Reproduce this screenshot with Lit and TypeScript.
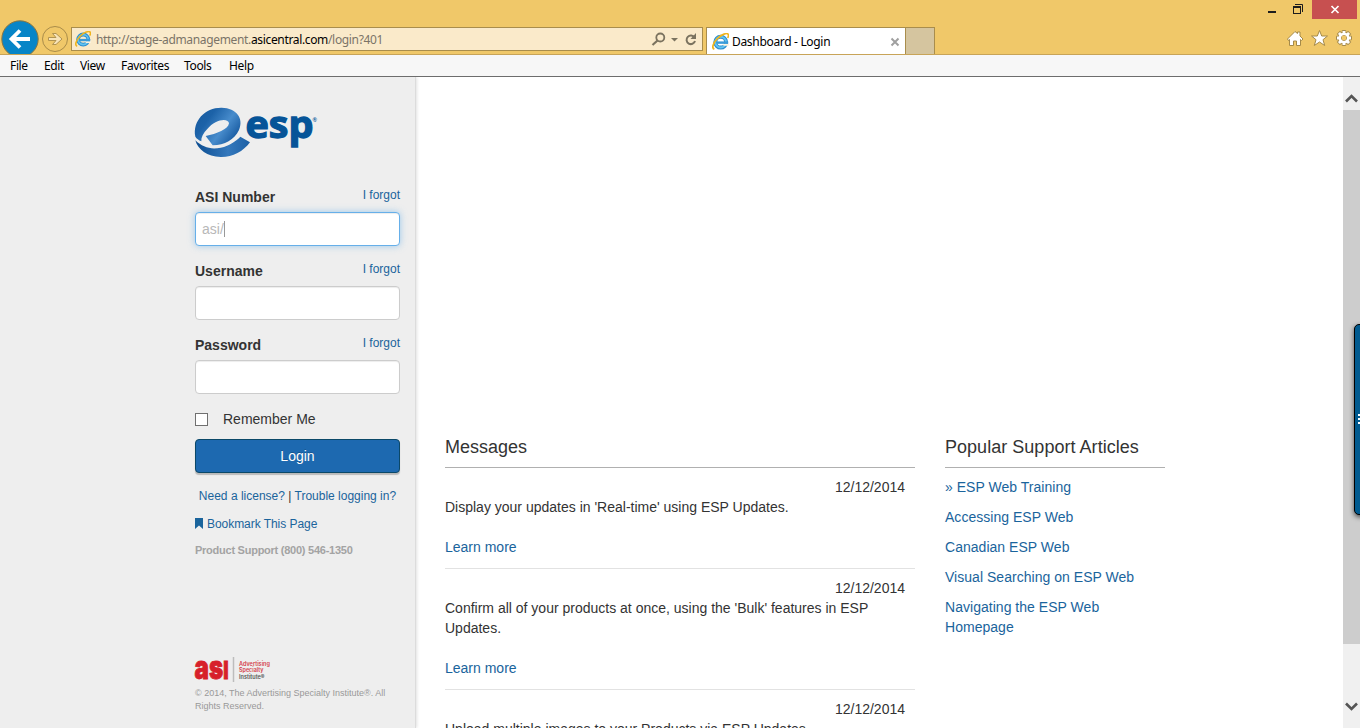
import { LitElement, html, css, svg } from "lit";
import { customElement } from "lit/decorators.js";

const ieLogo = (size: number) => html`
  <svg width=${size} height=${size} viewBox="0 0 16 16">
    <circle cx="8.2" cy="8.6" r="5.1" fill="none" stroke="#2c8fd0" stroke-width="3.8" />
    <circle cx="8.2" cy="8.6" r="5" fill="none" stroke="#62c3f0" stroke-width="1.8" />
    <path d="M9.5 10.2H15.9V12H11Z" fill="#fcf3df" />
    <path d="M4.5 7.9H15.2V10.200H4.5Z" fill="#3a9bd8" />
    <path d="M2.2 15.2C-.6 14.3 1 9.400 5 5.200C9 1.200 14.300-.6 15.300 1.300C15.800 2.300 15.300 3.600 14.700 4.600" fill="none" stroke="#f0b41c" stroke-width="1.600" />
  </svg>`;

const chevron = (d: string) => html`
  <svg width="17" height="14" viewBox="0 0 17 14"><path d=${d} fill="none" stroke="#555" stroke-width="2.600" /></svg>`;

@customElement("browser-chrome")
class BrowserChrome extends LitElement {
  static styles = css`
    :host { display: block; font-family: "Noto Sans", "Open Sans", sans-serif; font-size: 12px; color: #000; }
    svg { display: block; flex: none; }
    .frame { background: #f0c869; border-bottom: 1px solid #c8a458; height: 54px; }
    .caption { display: flex; justify-content: flex-end; height: 20px; padding-right: 3px; }
    .nav { display: flex; height: 34px; }
    .address { display: flex; align-items: center; box-sizing: border-box; width: 632px; height: 24px; margin: 7px 3px 0 1px; border: 1px solid #a98d4c; background: #faeaca; padding: 0 4px 0 3px; }
    .url { flex: 1; margin-left: 5px; padding-top: 2px; color: #7b7468; white-space: nowrap; line-height: 20px; letter-spacing: -0.34px; }
    .url b { font-weight: 400; color: #000; }
    .tab { display: flex; align-items: center; box-sizing: border-box; width: 200px; height: 27px; margin-top: 7px; border: 1px solid #a98d4c; border-bottom: 0; background: #fff; padding: 1px 5px 0 5px; }
    .title { flex: 1; margin-left: 3px; letter-spacing: -0.32px; }
    .new { box-sizing: border-box; width: 29px; height: 27px; margin-top: 7px; border: 1px solid #a98d4c; border-left: 0; border-bottom: 0; background: #d5c59f; }
    .tools { display: flex; gap: 8px; margin: 9px 6px 0 auto; }
    .menu { display: flex; height: 21px; background: #f7f7f7; border-bottom: 1px solid #6d6d6d; padding-left: 10px; line-height: 21px; }
    .menu span { white-space: nowrap; letter-spacing: -0.35px; }
    .m0 { width: 34px; } .m1 { width: 36px; } .m2 { width: 41px; } .m3 { width: 63px; } .m4 { width: 45px; } .m5 { width: 40px; }
  `;
  render() {
    return html`
      <div class="frame">
        <div class="caption">
          <svg width="94" height="20" viewBox="1263 0 94 20">
            <path d="M1268 11H1276V13H1268Z" fill="#1d1d1d" />
            <path d="M1293 6H1301V14H1293ZM1294 8V13H1300V8Z" fill="#1d1d1d" fill-rule="evenodd" />
            <path d="M1295 4.500H1302.500V12" fill="none" stroke="#1d1d1d" />
            <path d="M1312 0H1357V19H1312Z" fill="#c75050" />
            <path d="M1331.500 6L1338.500 13M1338.500 6L1331.500 13" stroke="#fff" stroke-width="1.700" />
          </svg>
        </div>
        <div class="nav">
          <svg width="70" height="34" viewBox="0 20 70 34">
            <circle cx="20" cy="39" r="18.200" fill="#0785c7" stroke="#8a7640" />
            <path d="M30 39H12M20 30.500L11.500 39L20 47.500" fill="none" stroke="#fff" stroke-width="3.800" />
            <circle cx="55" cy="39" r="12.500" fill="none" stroke="#a98c49" />
            <path d="M48.500 37.500H56L52.500 33.500H56L62 39L56 44.500H52.500L56 40.500H48.500Z" fill="#f8e4b8" stroke="#a98c49" stroke-width=".9" />
          </svg>
          <div class="address">
            ${ieLogo(16)}
            <div class="url"><span>http://stage-admanagement.</span><b>asicentral.com</b>/login?401</div>
            <svg width="48" height="20" viewBox="650 29 48 20" fill="none" stroke="#7b735f">
              <circle cx="660.300" cy="37.500" r="4" stroke-width="1.800" />
              <path d="M657.500 40.500L652.500 45" stroke-width="2.200" />
              <path d="M671 38H678L674.500 41.500Z" fill="#7b735f" stroke="none" />
              <path d="M694.500 37.500A4.300 4.300 0 1 0 695 41" stroke-width="2" />
              <path d="M696 33V39H690.500Z" fill="#7b735f" stroke="none" />
            </svg>
          </div>
          <div class="tab">
            ${ieLogo(17)}
            <div class="title">Dashboard - Login</div>
            <svg width="10" height="10" viewBox="0 0 10 10"><path d="M1.500 1.500L8.500 8.500M8.500 1.500L1.500 8.500" stroke="#a0a0a0" stroke-width="2" /></svg>
          </div>
          <div class="new"></div>
          <div class="tools">
            <svg width="68" height="20" viewBox="1286 29 68 20" fill="#fff" stroke="#a58a49" stroke-width="1">
              <path d="M1287.500 39L1295 31.500L1297.500 33.500V32H1300V36L1303 39L1301.500 40.500L1300.500 39.500V45.500H1296.500V41H1293.500V45.500H1289.500V39.500L1288.500 40.500Z" />
              <path d="M1319.500 30.500L1321.700 36H1327.500L1323 39.700L1324.700 45.500L1319.500 42L1314.300 45.500L1316 39.700L1311.500 36H1317.300Z" />
              <g>${Array.from({ length: 8 }, (_, i) => svg`<path d="M1342.200 34V30.500H1345.800V34" transform=${`rotate(${i * 45} 1344 38)`} />`)}</g>
              <circle cx="1344" cy="38" r="4.300" fill="none" stroke="#a58a49" stroke-width="3.800" />
              <circle cx="1344" cy="38" r="4.300" fill="none" stroke="#fff" stroke-width="2.600" />
              ${Array.from({ length: 8 }, (_, i) => svg`<path d="M1342.700 31H1345.300V35H1342.700Z" stroke="none" transform=${`rotate(${i * 45} 1344 38)`} />`)}
            </svg>
          </div>
        </div>
      </div>
      <div class="menu">
        ${["File", "Edit", "View", "Favorites", "Tools", "Help"].map((t, i) => html`<span class="m${i}">${t}</span>`)}
      </div>`;
  }
}

@customElement("login-panel")
class LoginPanel extends LitElement {
  static styles = css`
    :host { display: block; box-sizing: border-box; width: 416px; height: 651px; padding: 28px 0 0 195px; background: #eee; border-right: 1px solid #dcdcdc; box-shadow: 1px 0 3px rgba(0, 0, 0, 0.12); }
    svg { display: block; overflow: visible; }
    .col { width: 205px; height: 623px; display: flex; flex-direction: column; }
    .form { margin-top: 27px; display: flex; flex-direction: column; }
    .field { margin-bottom: 15px; }
    .head { display: flex; justify-content: space-between; height: 20px; margin-bottom: 5px; font-weight: 700; }
    a { color: #1a649c; }
    .forgot { font-size: 12px; font-weight: 400; line-height: 16px; }
    .input { box-sizing: border-box; height: 34px; border: 1px solid #ccc; border-radius: 4px; background: #fff; box-shadow: inset 0 1px 1px rgba(0, 0, 0, 0.075); padding: 6px; color: #b8b8b8; display: flex; }
    .focus { border-color: #66afe9; box-shadow: inset 0 1px 1px rgba(0, 0, 0, 0.075), 0 0 7px rgba(102, 175, 233, 0.6); }
    .caret { width: 1px; height: 16px; margin-top: 2px; background: #999; }
    .remember { display: flex; align-items: center; gap: 15px; height: 20px; }
    .box { box-sizing: border-box; width: 13px; height: 13px; border: 1px solid #707070; background: #fff; margin-top: 1px; }
    .login { box-sizing: border-box; height: 34px; margin-top: 10px; border: 1px solid #0b4868; border-radius: 4px; background: #1d69b0; color: #fff; text-align: center; line-height: 32px; box-shadow: 0 2px 1px rgba(0, 0, 0, 0.22); text-shadow: 0 -1px 0 rgba(0, 0, 0, 0.2); }
    .help { margin-top: 13px; text-align: center; font-size: 12px; white-space: nowrap; }
    .bookmark { display: flex; align-items: center; gap: 4px; margin-top: 8px; font-size: 12px; letter-spacing: -0.05px; }
    .bookmark svg { margin-bottom: 1px; }
    .support { margin-top: 6px; font-size: 11px; color: #a3a3a3; font-weight: 700; letter-spacing: -0.25px; }
    .legal { margin-top: auto; padding-bottom: 15px; font-size: 9px; line-height: 13px; color: #999; white-space: nowrap; }
    .legal svg { margin-bottom: 3px; }
  `;
  render() {
    return html`<div class="col">
      <svg width="125" height="55" viewBox="195 105 125 55">
        <defs>
          <linearGradient id="loop" x1="0" y1="0" x2="1" y2=".6"><stop offset="0" stop-color="#185a9d" /><stop offset=".35" stop-color="#1c62a8" /><stop offset=".7" stop-color="#488ccc" /><stop offset="1" stop-color="#1a5da3" /></linearGradient>
          <linearGradient id="tail" x1="0" y1="0" x2="1" y2="0"><stop offset="0" stop-color="#0b4c90" /><stop offset=".6" stop-color="#3478bc" /><stop offset="1" stop-color="#1d60a5" /></linearGradient>
        </defs>
        <g transform="translate(190 100) scale(.33333)">
          <path d="M16 110C7 62 46 22 95 23C140 24 162 55 147 90C133 119 104 136 68 136L47 108C80 102 115 88 117 70C116 53 76 56 52 87C40 99 33 112 34 124C26 120 20 116 16 110Z" fill="url(#loop)" />
          <path d="M16 121C38 143 64 149 92 143C120 137 138 123 151 110L180 127C160 155 126 172 92 171C51 169 24 150 16 121Z" fill="url(#tail)" />
        </g>
        <text x="245.500" y="138" font-family="Open Sans" font-weight="700" font-size="38" textLength="68" lengthAdjust="spacingAndGlyphs" fill="#065498" stroke="#065498" stroke-width="1.300">esp</text>
        <text x="312.500" y="122" font-family="Liberation Sans" font-weight="700" font-size="6" fill="#065498">®</text>
      </svg>
      <div class="form">
        ${["ASI Number", "Username", "Password"].map((name, i) => html`
          <div class="field">
            <div class="head"><span>${name}</span><a class="forgot">I forgot</a></div>
            <div class="input ${i === 0 ? "focus" : ""}">${i === 0 ? html`asi/<span class="caret"></span>` : ""}</div>
          </div>`)}
        <div class="remember"><span class="box"></span><span>Remember Me</span></div>
        <div class="login">Login</div>
        <div class="help"><a>Need a license?</a> | <a>Trouble logging in?</a></div>
        <div class="bookmark">
          <svg width="8" height="11" viewBox="0 0 8 11"><path d="M0 0H8V11L4 7.500L0 11Z" fill="#1a649c" /></svg>
          <a>Bookmark This Page</a>
        </div>
        <div class="support">Product Support (800) 546-1350</div>
      </div>
      <div class="legal">
        <svg width="80" height="28" viewBox="195 656 80 28" font-family="Inter, sans-serif">
          <text x="194.500" y="678.500" font-size="33" font-weight="900" textLength="34" lengthAdjust="spacingAndGlyphs" fill="#d7202a" stroke="#d7202a" stroke-width=".8">as<tspan font-size="25">I</tspan></text>
          <path d="M233.500 657V682" stroke="#bdbdbd" stroke-width="1.500" />
          <g font-size="5.600" font-weight="600" fill="#d4404a">
            <text x="239" y="665.500" textLength="31" lengthAdjust="spacingAndGlyphs">Advertising</text>
            <text x="239" y="672" textLength="24.500" lengthAdjust="spacingAndGlyphs">Specialty</text>
            <text x="239" y="678.500" textLength="25.500" lengthAdjust="spacingAndGlyphs" fill="#555">Institute®</text>
          </g>
        </svg>
        © 2014, The Advertising Specialty Institute®. All<br />Rights Reserved.
      </div>
    </div>`;
  }
}

const messages = [
  "Display your updates in 'Real-time' using ESP Updates.",
  "Confirm all of your products at once, using the 'Bulk' features in ESP Updates.",
  "Upload multiple images to your Products via ESP Updates.",
];
const articles = ["» ESP Web Training", "Accessing ESP Web", "Canadian ESP Web", "Visual Searching on ESP Web", "Navigating the ESP Web Homepage"];

@customElement("news-area")
class NewsArea extends LitElement {
  static styles = css`
    :host { flex: 1; display: flex; gap: 30px; align-items: flex-start; padding: 360px 0 0 29px; }
    h2 { margin: 0; font-size: 18px; font-weight: 400; line-height: 20px; padding-bottom: 10px; border-bottom: 1px solid #b0b0b0; }
    .messages { width: 470px; }
    .articles { width: 220px; }
    .item { padding: 9px 0 11px; border-bottom: 1px solid #e2e2e2; }
    .date { text-align: right; padding-right: 10px; }
    .more { margin-top: 20px; }
    a { color: #1a649c; }
    .links { display: flex; flex-direction: column; gap: 10px; padding-top: 9px; letter-spacing: 0.03px; }
    .articles h2 { letter-spacing: 0.03px; }
  `;
  render() {
    return html`
      <section class="messages">
        <h2>Messages</h2>
        ${messages.map((m) => html`<div class="item"><div class="date">12/12/2014</div><div>${m}</div><div class="more"><a>Learn more</a></div></div>`)}
      </section>
      <section class="articles">
        <h2>Popular Support Articles</h2>
        <div class="links">${articles.map((t) => html`<a>${t}</a>`)}</div>
      </section>`;
  }
}

@customElement("app-root")
class AppRoot extends LitElement {
  static styles = css`
    :host { display: block; position: relative; width: 1360px; height: 728px; overflow: hidden; background: #fff; }
    .page { display: flex; height: 651px; font: 14px/20px "Liberation Sans", Arial, sans-serif; color: #333; overflow: hidden; }
    .bar { display: flex; flex-direction: column; width: 17px; height: 651px; background: #f0f0f0; }
    .bar svg { display: block; }
    .up { height: 19px; padding-top: 14px; }
    .thumb { height: 534px; background: #cdcdcd; }
    .down { margin-top: auto; padding-bottom: 14px; }
    .feedback { position: absolute; left: 1354px; top: 324px; box-sizing: border-box; width: 20px; height: 191px; background: #005a8f; border: 1px solid #000; border-radius: 5px; box-shadow: 0 2px 5px rgba(0, 0, 0, 0.65); padding: 89px 0 0 3px; }
    .feedback svg { display: block; }
  `;
  render() {
    return html`
      <browser-chrome></browser-chrome>
      <div class="page">
        <login-panel></login-panel>
        <news-area></news-area>
        <div class="bar">
          <div class="up">${chevron("M3 10.500L8.500 5L14 10.500")}</div>
          <div class="thumb"></div>
          <div class="down">${chevron("M3 3.500L8.500 9L14 3.500")}</div>
        </div>
      </div>
      <div class="feedback"><svg width="10" height="10"><path d="M0 1H9M0 5H9M0 9H9" stroke="#fff" stroke-width="2" /></svg></div>`;
  }
}
